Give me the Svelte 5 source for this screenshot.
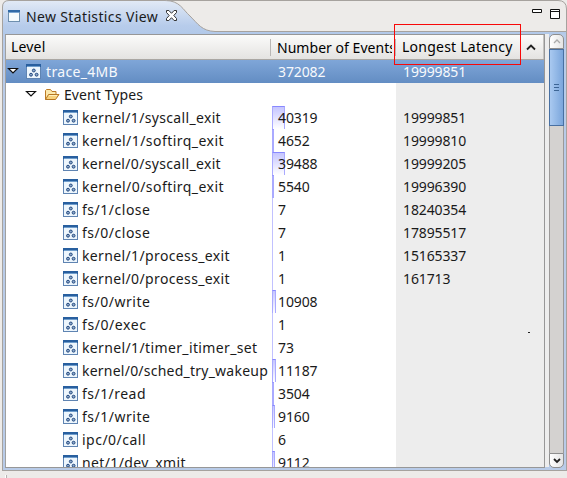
<script>
  const rows = [
    ['kernel/1/syscall_exit', '40319', '19999851', 13, 139],
    ['kernel/1/softirq_exit', '4652', '19999810', 2, 142],
    ['kernel/0/syscall_exit', '39488', '19999205', 13, 139],
    ['kernel/0/softirq_exit', '5540', '19996390', 2, 142],
    ['fs/1/close', '7', '18240354', 1, 68.5],
    ['fs/0/close', '7', '17895517', 1, 68.5],
    ['kernel/1/process_exit', '1', '15165337', 1, 148],
    ['kernel/0/process_exit', '1', '161713', 1, 148],
    ['fs/0/write', '10908', '', 4, 68.5],
    ['fs/0/exec', '1', '', 1, 64.5],
    ['kernel/1/timer_itimer_set', '73', '', 1, 175.5],
    ['kernel/0/sched_try_wakeup', '11187', '', 4, 186],
    ['fs/1/read', '3504', '', 2, 64],
    ['fs/1/write', '9160', '', 3, 68.5],
    ['ipc/0/call', '6', '', 1, 64],
    ['net/1/dev_xmit', '9112', '', 3, 104]
  ];

  // Spreads the letters of a label over a given width.
  function fit(node, width) {
    const natural = node.getBoundingClientRect().width;
    node.style.letterSpacing = (width - natural) / node.textContent.length + 'px';
  }
</script>

{#snippet traceIcon()}
  <svg class="icon" width="15" height="15" viewBox="0 0 15 15">
    <rect x=".5" y=".5" width="14" height="14" fill="#edf6fd" stroke="#5f84b2" />
    <path d="M0 0h15v3H0z" fill="#285f9f" /><path d="M1 2h13v1H1z" fill="#6f9dcc" />
    <g fill="#8fa9cc" stroke="#234a80"><circle cx="7.800" cy="6.500" r="1.450" /><circle cx="5" cy="10.700" r="1.450" /><circle cx="10.600" cy="10.700" r="1.450" /></g>
  </svg>
{/snippet}
{#snippet arrow()}
  <svg class="arrow" width="12" height="8" viewBox="0 0 12 8"><path d="M1.500 1.500h9L6 6z" fill="#fff" stroke="#111" stroke-width="1.200" /></svg>
{/snippet}

<div class="page">
  <div class="view">
    <div class="tabs">
      <svg class="shape" width="565" height="34" viewBox="0 0 565 34">
        <defs><linearGradient id="tab" x2="0" y2="1"><stop stop-color="#e2eaf6" /><stop offset=".75" stop-color="#b7cceb" /><stop offset="1" stop-color="#b2c9e9" /></linearGradient></defs>
        <path d="M0 34V7Q0 .5 7 .5H163C178 .5 181 10 188 16C196 24 200 31 213 31.5H565V34z" fill="url(#tab)" />
        <path d="M.5 34V7Q.5 .5 7 .5H163C178 .5 181 10 188 16C196 24 200 31 213 31.5H564M165 .5H556Q564.5 .5 564.5 9V34" fill="none" stroke="#a6a29e" />
      </svg>
      <svg class="win" width="12" height="12" viewBox="0 0 12 12"><rect x=".5" y=".5" width="11" height="11" fill="#f3fafd" stroke="#6e8fae" /><path d="M0 0h12v2H0z" fill="#2e69a7" /><path d="M1 2h10v1H1z" fill="#77a5d2" /></svg>
      <span class="title"><span use:fit={132}>New Statistics View</span></span>
      <svg class="close" width="11" height="11" viewBox="0 0 11 11"><path d="M.5.5h2.400l2.600 2.800L8.100.5h2.400v2L7.800 5.500l2.700 3v2H8.100L5.500 7.700 2.900 10.500H.5v-2l2.700-3-2.700-3z" fill="#fff" stroke="#333" /></svg>
      <span class="space"></span>
      <svg class="tools" width="28" height="11" viewBox="0 0 28 11"><path d="M.5.5h9v3h-9zM18.500.5h9v9h-9zM18.500 2.500h9" fill="#fff" stroke="#111" /></svg>
    </div>
    <div class="body">
      <div class="table">
        <div class="row head">
          <div class="level"><span use:fit={34.5}>Level</span></div>
          <div class="num"><span use:fit={119}>Number of Events</span></div>
          <div class="lat"><span use:fit={110.5}>Longest Latency</span>
            <svg width="12" height="8" viewBox="0 0 12 8"><path d="M2 6.500L6 2.500l4 4" fill="none" stroke="#222" stroke-width="1.800" /></svg></div>
        </div>
        <div class="row sel">
          <div class="level root">{@render arrow()}{@render traceIcon()}<span use:fit={72}>trace_4MB</span></div>
          <div class="num"><span class="n">372082</span></div>
          <div class="lat"><span class="n">19999851</span></div>
        </div>
        <div class="row">
          <div class="level group">{@render arrow()}
            <svg class="icon" width="16" height="13" viewBox="0 0 16 13"><path d="M1.500 11.500v-9l1-1h4l1.500 2h4v3" fill="#fce9ad" stroke="#bd7b25" /><path d="M1.500 11.500l3-5H15l-3.500 5z" fill="#f8d27c" stroke="#b77722" /><path d="M5 7.500h8" stroke="#fff0bd" /></svg>
            <span use:fit={79}>Event Types</span></div>
          <div class="num"></div><div class="lat"></div>
        </div>
        {#each rows as [name, count, latency, bar, width]}
          <div class="row">
            <div class="level leaf">{@render traceIcon()}<span use:fit={width}>{name}</span></div>
            <div class="num"><i class:thin={bar === 1} style:width="{bar}px"></i><span class="n">{count}</span></div>
            <div class="lat"><span class="n">{latency}</span></div>
          </div>
        {/each}
      </div>
      <div class="scroll">
        <div class="btn"><svg width="10" height="7" viewBox="0 0 10 7"><path d="M2 5l3-3 3 3" fill="none" stroke="#aaa" stroke-width="1.300" /></svg></div>
        <div class="thumb"><b></b><b></b><b></b></div>
        <div class="track"></div>
        <div class="btn down"><svg width="10" height="7" viewBox="0 0 10 7"><path d="M2 2l3 3 3-3" fill="none" stroke="#222" stroke-width="1.800" /></svg></div>
      </div>
    </div>
  </div>
  <div class="highlight"></div>
  <div class="speck"></div>
  <div class="foot"></div>
</div>

<style>
  .page { position: relative; width: 567px; height: 478px; overflow: hidden; background: #edebe9; font: 14px "Noto Sans", sans-serif; color: #1a1a1a; }
  .page, .page * { box-sizing: border-box; }
  svg { display: block; flex: none; }
  .view { margin-left: 2px; width: 565px; height: 471px; display: flex; flex-direction: column; }
  .tabs { position: relative; height: 34px; display: flex; align-items: flex-start; color: #1a1a1a; }
  .tabs > :not(.shape) { position: relative; }
  .shape { position: absolute; inset: 0; }
  .win { margin: 10px 0 0 6px; }
  .title { margin: 7px 0 0 6px; width: 138px; line-height: 20px; white-space: pre; }
  .close { margin-top: 10px; margin-left: 2px; }
  .space { flex: 1; }
  .tools { margin: 9px 7px 0 0; }
  .body { flex: 1; min-height: 0; display: flex; background: linear-gradient(#ededed, #ededed) 541px 0 / 5px 433px no-repeat, #b8cbe8; border: solid #a6a29e; border-width: 0 1px 1px; padding: 0 2px 2px; }
  .table { width: 541px; overflow: hidden; background: #fff; border: 1px solid #979797; border-left-color: #a0a0a0; }
  .row { display: flex; height: 23px; line-height: 23px; white-space: pre; }
  .level { width: 265px; display: flex; align-items: center; flex: none; }
  .num { position: relative; width: 125px; flex: none; padding-left: 7px; overflow: hidden; }
  .lat { width: 149px; flex: none; padding-left: 7px; background: #ededed; }
  .n { position: relative; letter-spacing: -.12px; }
  .head { height: 25px; line-height: 26px; background: linear-gradient(#fbfbfa, #e4e3e1); border-bottom: 1px solid #aaa7a3; color: #000; }
  .head .level { width: 264px; padding-left: 5px; }
  .head .num { padding-left: 7px; width: 122px; margin-right: 3px; }
  .head .num, .head .lat { background: linear-gradient(#b9b7b5, #b9b7b5) 0 4px / 1px 17px no-repeat; }
  .head .lat { display: flex; align-items: center; justify-content: space-between; padding: 0 6px 0 7px; border-right: 1px solid #c4c3c1; }
  .sel { color: #f7f9fc; background: linear-gradient(#7fa6d8, #638dc3); }
  .sel .lat { background: none; }
  .arrow { margin-top: -1px; }
  .icon { margin-top: -1px; }
  .root { padding-left: 1px; }
  .root .icon { margin-left: 7px; }
  .root span { margin-left: 5px; }
  .group span { margin-left: 4px; }
  .group { padding-left: 19px; }
  .group .icon { margin-left: 7px; }
  .leaf { padding-left: 57px; }
  .leaf span { margin-left: 4px; }
  i { position: absolute; left: 1px; top: 0; height: 23px; border: 1px solid #aaaaff; border-top-color: #8888ff; border-bottom: 0; background: linear-gradient(#c5c5ff, #fff); }
  .thin { border: 0; background: #c1c1ff; }
  .scroll { width: 15px; margin-left: 4px; display: flex; flex-direction: column; flex: none; }
  .btn { height: 15px; border: 1px solid #8e8e8e; border-radius: 5px 5px 0 0; background: linear-gradient(90deg, #fff, #e4e4e4); display: grid; place-items: center; }
  .down { border-radius: 0 0 5px 5px; }
  .thumb { height: 77px; border: 1px solid #4870a2; background: linear-gradient(90deg, #a9c9f0, #7ba6dc); display: flex; flex-direction: column; align-items: center; justify-content: center; gap: 2px; }
  b { width: 5px; height: 1px; background: #3d6595; }
  .track { flex: 1; background: #d4d2d0; border: solid #9b9998; border-width: 0 1px; }
  .highlight { position: absolute; left: 394px; top: 24px; width: 127px; height: 41px; border: 1px solid #f80808; }
  .speck { position: absolute; left: 528px; top: 332px; width: 2px; height: 1px; background: #222; }
  .foot { margin: 4px 0 0 5px; width: 2px; height: 4px; background: linear-gradient(90deg, #fff 50%, #b5b3b1 50%); }
</style>
